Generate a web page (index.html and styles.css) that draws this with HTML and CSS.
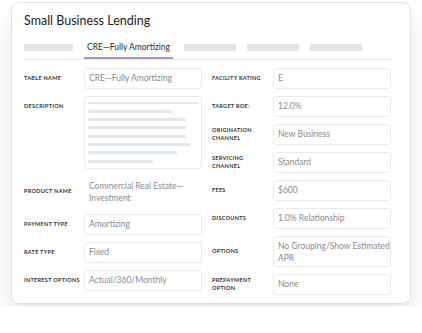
FILE: index.html
```html
<!DOCTYPE html>
<html lang="en">
<head>
    <meta charset="UTF-8">
    <meta name="viewport" content="width=device-width, initial-scale=1.0">
    <title>Small Business Lending</title>
    <link rel="stylesheet" href="styles.css">
</head>
<body>
    <div class="card">
        <h1 class="title">Small Business Lending</h1>
        <div class="tabs">
            <div class="tab-bar w49"></div>
            <div class="tab active">CRE—Fully Amortizing</div>
            <div class="tab-bar"></div>
            <div class="tab-bar"></div>
            <div class="tab-bar"></div>
        </div>
        <div class="form">
            <div class="column">
                <div class="row">
                    <div class="label">Table Name</div>
                    <div class="field">CRE—Fully Amortizing</div>
                </div>
                <div class="row top">
                    <div class="label">Description</div>
                    <div class="field desc">
                        <span class="line" style="width: 110px"></span>
                        <span class="line" style="width: 84px"></span>
                        <span class="line" style="width: 98px"></span>
                        <span class="line" style="width: 98px"></span>
                        <span class="line" style="width: 98px"></span>
                        <span class="line" style="width: 103px"></span>
                        <span class="line" style="width: 89px"></span>
                        <span class="line" style="width: 65px"></span>
                    </div>
                </div>
                <div class="row">
                    <div class="label">Product Name</div>
                    <div class="field tall plain">Commercial Real Estate—<br>Investment</div>
                </div>
                <div class="row">
                    <div class="label">Payment Type</div>
                    <div class="field">Amortizing</div>
                </div>
                <div class="row">
                    <div class="label">Rate Type</div>
                    <div class="field">Fixed</div>
                </div>
                <div class="row">
                    <div class="label">Interest Options</div>
                    <div class="field">Actual/360/Monthly</div>
                </div>
            </div>
            <div class="column right">
                <div class="row">
                    <div class="label">Facility Rating</div>
                    <div class="field">E</div>
                </div>
                <div class="row">
                    <div class="label">Target ROE:</div>
                    <div class="field">12.0%</div>
                </div>
                <div class="row">
                    <div class="label">Origination Channel</div>
                    <div class="field">New Business</div>
                </div>
                <div class="row">
                    <div class="label">Servicing Channel</div>
                    <div class="field">Standard</div>
                </div>
                <div class="row">
                    <div class="label">Fees</div>
                    <div class="field">$600</div>
                </div>
                <div class="row">
                    <div class="label">Discounts</div>
                    <div class="field">1.0% Relationship</div>
                </div>
                <div class="row">
                    <div class="label">Options</div>
                    <div class="field tall">No Grouping/Show Estimated<br>APR</div>
                </div>
                <div class="row">
                    <div class="label">Prepayment Option</div>
                    <div class="field">None</div>
                </div>
            </div>
        </div>
    </div>
</body>
</html>
```

FILE: styles.css
```css
body {
    margin: 0;
    padding: 2px 11px;
    font-family: Lato, "Noto Sans", sans-serif;
    background-color: #ffffff;
    color: #222;
}
.card {
    width: 400px;
    height: 302px;
    box-sizing: border-box;
    border: 1.5px solid #dde1e9;
    border-radius: 8px;
    background-color: #fff;
    box-shadow: 0 14px 20px rgba(40, 40, 60, 0.12);
    padding: 10px 18px 0 12px;
}
.title {
    margin: 0;
    font-size: 12.5px;
    font-weight: 400;
    line-height: 16px;
    color: #1d1d1f;
}
.tabs {
    display: flex;
    align-items: center;
    gap: 11px;
    height: 22px;
    margin-top: 7.5px;
    border-bottom: 1px solid #e6e8ec;
}
.tab-bar {
    width: 52px;
    height: 7px;
    background-color: #e2e5ea;
}
.tab-bar.w49 {
    width: 49px;
}
.tab {
    width: 89px;
    height: 22px;
    box-sizing: border-box;
    display: flex;
    align-items: center;
    justify-content: center;
    font-size: 8.5px;
    color: #2a2a2a;
}
.tab.active {
    border-bottom: 2px solid #a892cf;
    margin-bottom: -1px;
}
.form {
    display: grid;
    grid-template-columns: 178px 179px;
    gap: 10px;
    margin-top: 8px;
}
.column {
    display: flex;
    flex-direction: column;
    gap: 7px;
}
.row {
    display: flex;
    align-items: center;
}
.row.top {
    align-items: flex-start;
}
.row.top .label {
    padding-top: 6px;
}
.label {
    width: 60px;
    flex-shrink: 0;
    box-sizing: border-box;
    padding-right: 3px;
    font-size: 5.5px;
    font-weight: 700;
    letter-spacing: 0.3px;
    line-height: 8px;
    text-transform: uppercase;
    color: #333;
}
.right .label {
    width: 61px;
    padding-right: 8px;
}
.field {
    width: 118px;
    height: 21px;
    box-sizing: border-box;
    border: 1px solid #e8eaee;
    border-radius: 3px;
    padding: 0 4px;
    display: flex;
    align-items: center;
    font-size: 8.5px;
    color: #8a8a8f;
}
.field.tall {
    height: 31px;
    align-items: flex-start;
    padding-top: 4.5px;
    line-height: 11.5px;
    white-space: nowrap;
}
.field.plain {
    border-color: transparent;
}
.field.desc {
    height: 73px;
    flex-direction: column;
    align-items: flex-start;
    gap: 5.6px;
    padding: 5px 3px;
}
.line {
    display: block;
    height: 3px;
    background-color: #e3e6ec;
}
```
